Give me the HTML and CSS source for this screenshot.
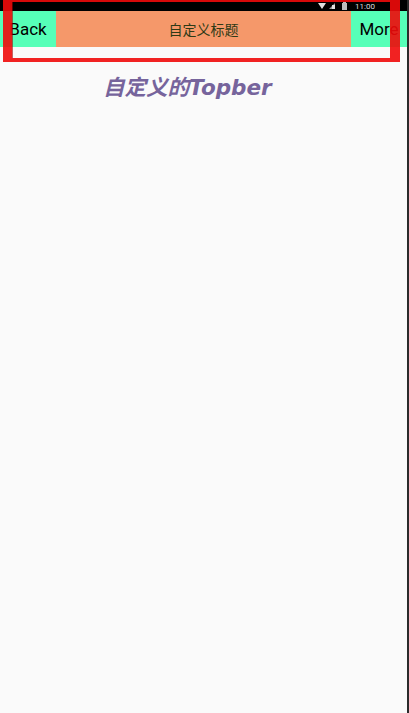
FILE: index.html
```html
<!DOCTYPE html>
<html lang="zh">
<head>
<meta charset="utf-8">
<title>自定义的Topber</title>
<link rel="stylesheet" href="styles.css">
</head>
<body>
<div class="screen">
  <div class="statusbar">
    <svg class="sb-icons" width="80" height="11" viewBox="0 0 80 11">
      <path d="M3 3 L11 3 L7 9 Z" fill="#e0e0e0"/>
      <path d="M14 9 L20 3 L20 9 Z" fill="#9a9a9a"/>
      <rect x="17" y="5" width="3" height="4" fill="#e0e0e0"/>
      <rect x="27" y="3" width="5" height="7" fill="#bdbdbd"/>
      <rect x="28" y="2" width="3" height="1" fill="#bdbdbd"/>
      <text x="40" y="9" font-size="8" fill="#dcdcdc" font-family="Roboto, sans-serif">11:00</text>
    </svg>
  </div>
  <div class="topbar">
    <div class="tb-btn">Back</div>
    <div class="tb-title">自定义标题</div>
    <div class="tb-btn">More</div>
  </div>
  <h1 class="page-title">自定义的Topber</h1>
  <div class="annot"></div>
</div>
</body>
</html>
```

FILE: styles.css
```css
html, body {
  margin: 0;
  padding: 0;
}
body {
  background: #2b2b2b;
  width: 409px;
  height: 713px;
  overflow: hidden;
}
.screen {
  position: relative;
  width: 407px;
  height: 713px;
  background: #fafafa;
  font-family: Roboto, "Noto Sans", "Noto Sans CJK SC", sans-serif;
}
.statusbar {
  height: 11px;
  background: #000;
  display: flex;
  justify-content: flex-end;
  align-items: center;
  padding-right: 8px;
}
.sb-icons {
  display: block;
  margin-right: 4px;
}
.topbar {
  display: flex;
  height: 36px;
  background: #f5986a;
}
.tb-btn {
  width: 56px;
  background: #56ffb8;
  color: #000;
  font-size: 17px;
  display: flex;
  align-items: center;
  justify-content: center;
}
.tb-title {
  flex: 1;
  display: flex;
  align-items: center;
  justify-content: center;
  font-family: "Noto Sans CJK SC", sans-serif;
  font-size: 14px;
  color: #2e3a16;
}
.page-title {
  margin: 27px 0 0;
  padding-left: 103px;
  font-family: "DejaVu Sans", "Noto Sans CJK SC", sans-serif;
  font-size: 21.5px;
  line-height: 28px;
  font-weight: bold;
  font-style: italic;
  color: #76649c;
}
.annot {
  position: absolute;
  left: 3px;
  top: 0;
  width: 378px;
  height: 56px;
  border-style: solid;
  border-color: rgba(240, 10, 10, 0.9);
  border-width: 2px 10px 4px 9px;
  box-shadow: inset 1px 0 0 rgba(160, 0, 0, 0.6);
}
```
